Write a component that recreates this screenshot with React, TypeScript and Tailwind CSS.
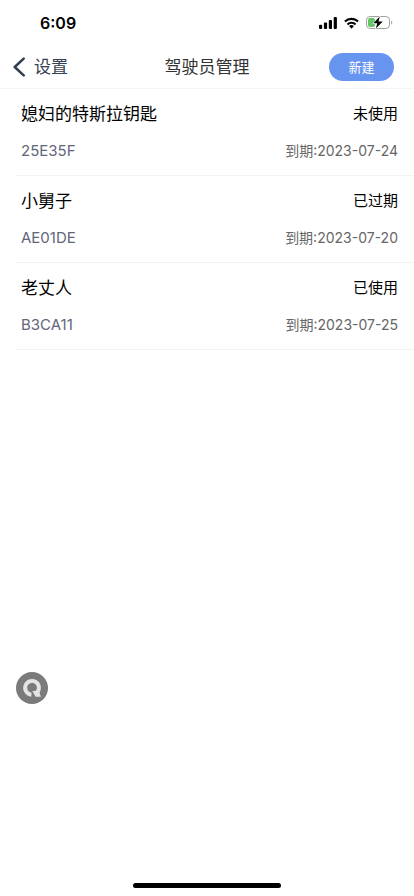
type Driver = {
  name: string;
  code: string;
  status: string;
  expires: string;
};

const drivers: Driver[] = [
  { name: "媳妇的特斯拉钥匙", code: "25E35F", status: "未使用", expires: "2023-07-24" },
  { name: "小舅子", code: "AE01DE", status: "已过期", expires: "2023-07-20" },
  { name: "老丈人", code: "B3CA11", status: "已使用", expires: "2023-07-25" },
];

function StatusBar() {
  return (
    <div className="flex h-[45px] items-center justify-between pr-[21px] pl-10">
      <time className="text-base leading-5 font-semibold text-black">6:09</time>
      <div className="flex items-center gap-[7px]">
        <svg width="18" height="12" viewBox="0 0 18 12" aria-hidden="true">
          <rect x="0" y="7.8" width="3.2" height="4.2" rx="1" />
          <rect x="4.9" y="5.6" width="3.2" height="6.4" rx="1" />
          <rect x="9.8" y="3" width="3.2" height="9" rx="1" />
          <rect x="14.7" y="0" width="3.2" height="12" rx="1" />
        </svg>
        <svg width="15" height="12" viewBox="0 0 16 12" aria-hidden="true">
          <g fill="none" stroke="#000" strokeWidth="2.3">
            <path d="M1 4.5a10 10 0 0 1 14 0" />
            <path d="M3.7 7.5a6.2 6.2 0 0 1 8.6 0" />
          </g>
          <path d="M5.4 9.3a3.8 3.8 0 0 1 5.2 0L8 12z" />
        </svg>
        <svg width="27" height="13" viewBox="0 0 27 13" aria-hidden="true">
          <rect x="0.5" y="0.5" width="23" height="12" rx="3.6" fill="none" stroke="#a0a0a0" />
          <path d="M25.1 4.4c1.6.6 1.6 3.6 0 4.2z" fill="#a0a0a0" />
          <rect x="2" y="2" width="7" height="9" rx="2" fill="#65c466" />
          <path
            d="M13.8.6 7.3 7.3h3.9l-1.3 5.1 6.8-7h-4.2z"
            stroke="#fff"
            strokeWidth="1.2"
            paintOrder="stroke"
            strokeLinejoin="round"
          />
        </svg>
      </div>
    </div>
  );
}

function Header() {
  return (
    <header className="grid h-11 grid-cols-3 items-center border-b border-[#f5f5f5] px-3 text-[17px] leading-6">
      <button type="button" className="flex items-center gap-2 justify-self-start text-[#354152]">
        <svg width="14" height="20" viewBox="0 0 14 20" fill="none" aria-hidden="true">
          <path
            d="M11.7 1.6 2.7 10l9 8.4"
            stroke="#303d4f"
            strokeWidth="2.5"
            strokeLinecap="round"
            strokeLinejoin="round"
          />
        </svg>
        设置
      </button>
      <h1 className="justify-self-center whitespace-nowrap text-[#333333]">驾驶员管理</h1>
      <button
        type="button"
        className="mr-2 h-7 w-[65px] justify-self-end rounded-full bg-[#6794ee] text-[13px] leading-5 text-white"
      >
        新建
      </button>
    </header>
  );
}

function DriverRow({ driver }: { driver: Driver }) {
  return (
    <li className="ml-[15px] flex flex-col gap-[13px] border-b border-[#f3f3f3] pt-[13px] pr-4 pb-3 pl-[6px]">
      <div className="flex items-center justify-between leading-6 text-black">
        <h2 className="text-[17px] leading-6">{driver.name}</h2>
        <span className="text-[15px] leading-6">{driver.status}</span>
      </div>
      <div className="flex items-center justify-between">
        <span className="text-[15px] leading-6 text-[#616679]">{driver.code}</span>
        <span className="text-sm leading-6 text-[#666666]">到期:{driver.expires}</span>
      </div>
    </li>
  );
}

export default function App() {
  return (
    <div className="flex min-h-screen flex-col bg-white font-['Inter','Noto_Sans_CJK_SC',sans-serif]">
      <StatusBar />
      <Header />
      <main className="grow">
        <ul>
          {drivers.map((driver) => (
            <DriverRow key={driver.code} driver={driver} />
          ))}
        </ul>
      </main>
      <button type="button" aria-label="Q" className="fixed bottom-48 left-4 size-8">
        <svg width="32" height="32" viewBox="0 0 32 32" aria-hidden="true">
          <circle cx="16" cy="16" r="16" fill="#7b7b7b" />
          <path
            d="M15.4 22.7A6.9 6.9 0 1 1 21.2 20.4"
            fill="none"
            stroke="#e4e4e4"
            strokeWidth="3.9"
          />
          <path d="M16.4 19 19.6 18.8 23 19.4 24.9 24.8H19.6z" fill="#e4e4e4" />
        </svg>
      </button>
      <footer className="flex justify-center pb-2">
        <div className="h-[5px] w-37 rounded-full bg-black" />
      </footer>
    </div>
  );
}
